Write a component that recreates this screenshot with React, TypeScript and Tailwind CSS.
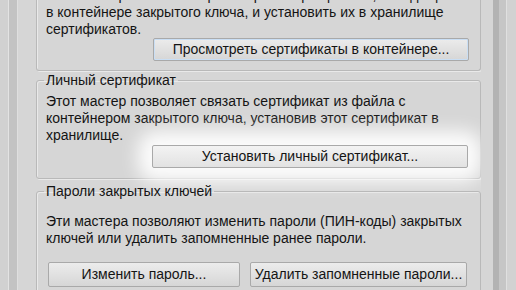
const btn =
  'h-[23px] rounded-[2px] border border-[#a9a9a9] bg-gradient-to-b from-[#ececec] to-[#d6d6d6] text-center leading-[21px] text-[#141414]'

function LeftEdge() {
  return (
    <div className="flex h-full w-[36px] shrink-0">
      <div className="w-[8px] bg-[#d1d1d1]" />
      <div className="w-px bg-[#e3e3e3]" />
      <div className="w-[8px] bg-[#c3c3c3]" />
      <div className="w-px bg-[#dfdfdf]" />
      <div className="flex-1 bg-[#d6d6d6]" />
    </div>
  )
}

function RightEdge() {
  return (
    <div className="flex h-full flex-1">
      <div className="w-[12px] bg-[#d6d6d6]" />
      <div className="w-[6px] bg-[#b3b3b3]" />
      <div className="w-[7px] bg-[#c6c6c6]" />
      <div className="w-px bg-[#e0e0e0]" />
      <div className="flex-1 bg-[#d2d2d2]" />
    </div>
  )
}

const group =
  'rounded-[3px] border border-[#b9b9b9] shadow-[inset_1px_1px_0_#e9e9e9,1px_1px_0_#e9e9e9] px-[9px]'

export default function App() {
  return (
    <div className="flex h-[290px] w-[516px] overflow-hidden bg-[#d6d6d6] font-['Tahoma','Liberation_Sans',sans-serif] text-[14px] leading-[17px] text-[#141414]">
      <LeftEdge />

      <div className="-mt-[13px] flex w-[445px] shrink-0 flex-col">
        {/* top group, header scrolled out of view */}
        <div className={`${group} rounded-t-none border-t-0 pb-[9px]`}>
          <p>
            Этот мастер позволяет просмотреть сертификаты, находящиеся
            <br />в контейнере закрытого ключа, и установить их в хранилище
            <br />
            сертификатов.
          </p>
          <div className="flex justify-end pr-[2px]">
            <button
              className={`${btn} w-[316px] border-[#3f86d6] shadow-[inset_0_0_0_1px_#c9def4]`}
            >
              Просмотреть сертификаты в контейнере...
            </button>
          </div>
        </div>

        <fieldset className={`${group} mt-px pb-[10px]`}>
          <legend className="ml-[-2px] px-[2px]">Личный сертификат</legend>
          <p className="pt-[4px]">
            Этот мастер позволяет связать сертификат из файла с
            <br />
            контейнером закрытого ключа, установив этот сертификат в
            <br />
            хранилище.
          </p>
          <div className="flex justify-end pr-[3px] pt-[1px]">
            {/* highlight glow around the button */}
            <div className="rounded-[6px] shadow-[0_0_18px_14px_rgba(255,255,255,0.92)]">
              <button className={`${btn} block w-[316px] from-[#f3f3f3] to-[#e2e2e2]`}>
                Установить личный сертификат...
              </button>
            </div>
          </div>
        </fieldset>

        <fieldset className={`${group} mt-[4px] pb-[10px]`}>
          <legend className="ml-[-2px] px-[2px]">Пароли закрытых ключей</legend>
          <p className="pt-[13px]">
            Эти мастера позволяют изменить пароли (ПИН-коды) закрытых
            <br />
            ключей или удалить запомненные ранее пароли.
          </p>
          <div className="flex gap-[10px] pl-[2px] pt-[15px]">
            <button className={`${btn} h-[25px] w-[192px]`}>Изменить пароль...</button>
            <button className={`${btn} h-[25px] w-[217px]`}>
              Удалить запомненные пароли...
            </button>
          </div>
        </fieldset>
      </div>

      <RightEdge />
    </div>
  )
}
